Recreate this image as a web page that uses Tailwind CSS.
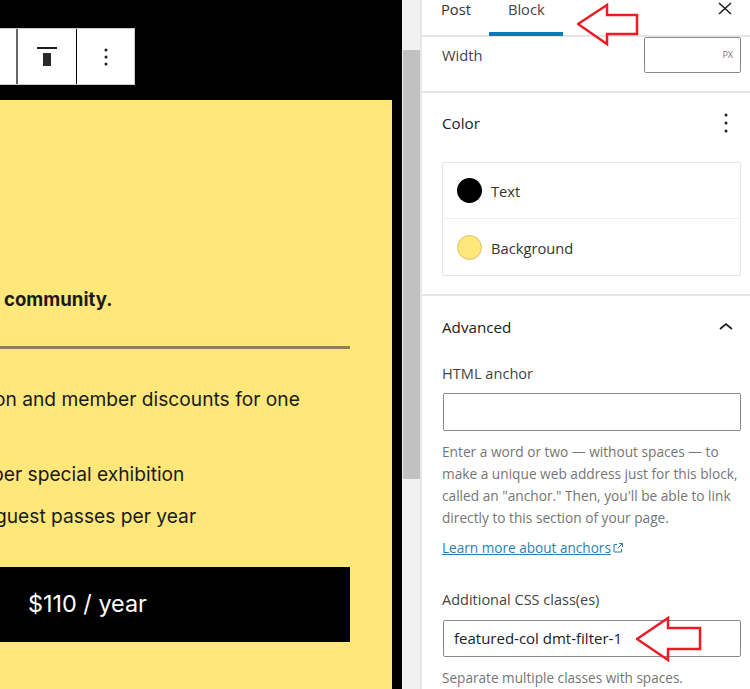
<!DOCTYPE html>
<html>
<head>
<meta charset="utf-8">
<script src="https://cdn.jsdelivr.net/npm/@tailwindcss/browser@4"></script>
</head>
<body class="bg-white">
<div class="relative w-[750px] h-[689px] overflow-hidden flex font-['Open_Sans',sans-serif]">
  <!-- canvas -->
  <div class="w-[402px] h-full bg-black shrink-0 flex flex-col">
    <div class="h-[100px] pt-[28px] shrink-0">
      <div class="h-[57px] w-[135px] bg-white flex border border-[#ccc] border-l-0">
        <div class="w-[18px] border-r-2 border-[#666]"></div>
        <div class="w-[59px] border-r border-black flex items-center justify-center">
          <svg width="24" height="24" viewBox="0 0 24 24" class="block"><path d="M2 2h20v2H2z" fill="#1e1e1e"/><rect x="8" y="8" width="8" height="13" fill="#2a2a2a"/></svg>
        </div>
        <div class="flex-1 flex items-center justify-center">
          <svg width="24" height="24" viewBox="0 0 24 24"><circle cx="12" cy="5" r="1.5" fill="#1e1e1e"/><circle cx="12" cy="12" r="1.5" fill="#1e1e1e"/><circle cx="12" cy="19" r="1.5" fill="#1e1e1e"/></svg>
        </div>
      </div>
    </div>
    <div class="w-[392px] flex-1 bg-[#ffe77a] font-['Inter',sans-serif] text-[#1a1a1a] overflow-hidden">
      <p class="mt-[188px] h-[22px] text-[18.6px] leading-[22px] font-bold whitespace-nowrap pl-[4px]">community.</p>
      <div class="mt-[36px] w-[350px] h-[3px] bg-[#8f8150]"></div>
      <p class="mt-[36px] -ml-[6px] text-[19.2px] leading-[28px] whitespace-nowrap">on and member discounts for one</p>
      <p class="mt-[47px] -ml-[8px] text-[19.2px] leading-[28px] whitespace-nowrap">per special exhibition</p>
      <p class="mt-[14px] -ml-[5px] text-[19.2px] leading-[28px] whitespace-nowrap">guest passes per year</p>
      <div class="mt-[37px] w-[350px] h-[75px] bg-black text-white text-[23.4px] flex items-center pl-[28px] pb-[2px] whitespace-nowrap">$110 / year</div>
    </div>
  </div>
  <!-- scrollbar -->
  <div class="w-[20px] h-full bg-[#f1f1f1] shrink-0 pt-[50px] border-r-2 border-[#e6e6e6]">
    <div class="w-[17px] ml-[1px] h-[429px] bg-[#c1c1c1]"></div>
  </div>
  <!-- sidebar -->
  <div class="flex-1 min-w-0 bg-white text-[#1e1e1e] text-[14.7px]">
    <div class="h-[37px] border-b-2 border-[#e6e6e6] relative flex">
      <span class="ml-[19px] leading-[19px] text-[#333]">Post</span>
      <span class="ml-[37px] leading-[19px] text-[#444]">Block</span>
      <div class="absolute left-[67px] bottom-[-1px] w-[74px] h-[4px] bg-[#007cba]"></div>
      <svg class="absolute left-[293px] top-[0px]" width="20" height="20" viewBox="0 0 20 20"><path d="M4 3l12 11M16 3L4 14" stroke="#1e1e1e" stroke-width="1.6" fill="none"/></svg>
    </div>
    <div class="h-[56px] border-b-2 border-[#e6e6e6] pl-[20px] pr-[9px] flex justify-between">
      <span class="leading-[20px] mt-[8px] text-[#444]">Width</span>
      <div class="w-[97px] h-[36px] border border-[#8a8a8a] rounded-[2px] flex items-center justify-end pr-[7px] text-[9px] text-[#777]">PX</div>
    </div>
    <div class="h-[203px] border-b-2 border-[#e6e6e6] px-[20px] pr-[9px] relative">
      <div class="flex justify-between items-center pt-[10px] h-[50px]">
        <span class="font-medium text-[15.2px] text-[#222]">Color</span>
        <svg class="mr-[6px]" width="18" height="24" viewBox="0 0 18 24"><circle cx="9" cy="4" r="1.5" fill="#1e1e1e"/><circle cx="9" cy="12" r="1.5" fill="#1e1e1e"/><circle cx="9" cy="20" r="1.5" fill="#1e1e1e"/></svg>
      </div>
      <div class="mt-[19px] w-[299px] border border-[#e6e6e6] rounded-[2px]">
        <div class="h-[56px] flex items-center pl-[14px] gap-[9px] border-b border-[#eee]">
          <span class="w-[25px] h-[25px] rounded-full bg-black"></span><span class="text-[#333] pt-[2px]">Text</span>
        </div>
        <div class="h-[56px] flex items-center pl-[14px] gap-[9px]">
          <span class="w-[25px] h-[25px] rounded-full bg-[#ffe77a] border border-[#d9c26a]"></span><span class="text-[#333] pt-[2px]">Background</span>
        </div>
      </div>
    </div>
    <div class="px-[20px] pr-[9px] relative">
      <div class="flex justify-between items-center pt-[20px] h-[42px]">
        <span class="font-medium text-[15.2px] text-[#222]">Advanced</span>
        <svg class="mr-[7px] -mt-[3px]" width="16" height="10" viewBox="0 0 16 10"><path d="M2 8l6-5 6 5" stroke="#1e1e1e" stroke-width="1.7" fill="none"/></svg>
      </div>
      <p class="mt-[25px] text-[14.6px] leading-[20px] text-[#444]">HTML anchor</p>
      <div class="mt-[10px] ml-[1px] w-[298px] h-[38px] border border-[#8a8a8a] rounded-[2px]"></div>
      <p class="mt-[10px] text-[13.7px] leading-[22px] text-[#757575] w-[300px]">Enter a word or two — without spaces — to make a unique web address just for this block, called an "anchor." Then, you'll be able to link directly to this section of your page.</p>
      <p class="mt-[9px] text-[13.6px] leading-[20px] text-[#2a7fb0] underline flex items-center">Learn more about anchors<svg class="ml-[1px]" width="12" height="12" viewBox="0 0 12 12"><path d="M5 2.5H2v7.5h7.5V7M7 1.5h3.5V5M10.5 1.5L5.5 6.5" stroke="#2a7fb0" stroke-width="1" fill="none"/></svg></p>
      <p class="mt-[32px] text-[14.5px] leading-[20px] text-[#444]">Additional CSS class(es)</p>
      <div class="mt-[10px] ml-[1px] w-[298px] h-[37px] border border-[#8a8a8a] rounded-[2px] flex items-center pl-[10px] text-[15px] text-[#222]">featured-col dmt-filter-1</div>
      <p class="mt-[11px] text-[13.6px] leading-[20px] text-[#757575] whitespace-nowrap">Separate multiple classes with spaces.</p>
    </div>
  </div>
  <!-- annotation arrows over the screenshot -->
  <svg class="absolute left-[577px] top-[3px]" width="64" height="44" viewBox="0 0 64 44"><path d="M1 21L30 2v10h30v19H30v10z" fill="none" stroke="#ec1c24" stroke-width="2.5"/></svg>
  <svg class="absolute left-[636px] top-[616px]" width="66" height="46" viewBox="0 0 66 46"><path d="M1 23L32 2v10h32v21H32v11z" fill="none" stroke="#ec1c24" stroke-width="2.5"/></svg>
</div>
</body>
</html>
